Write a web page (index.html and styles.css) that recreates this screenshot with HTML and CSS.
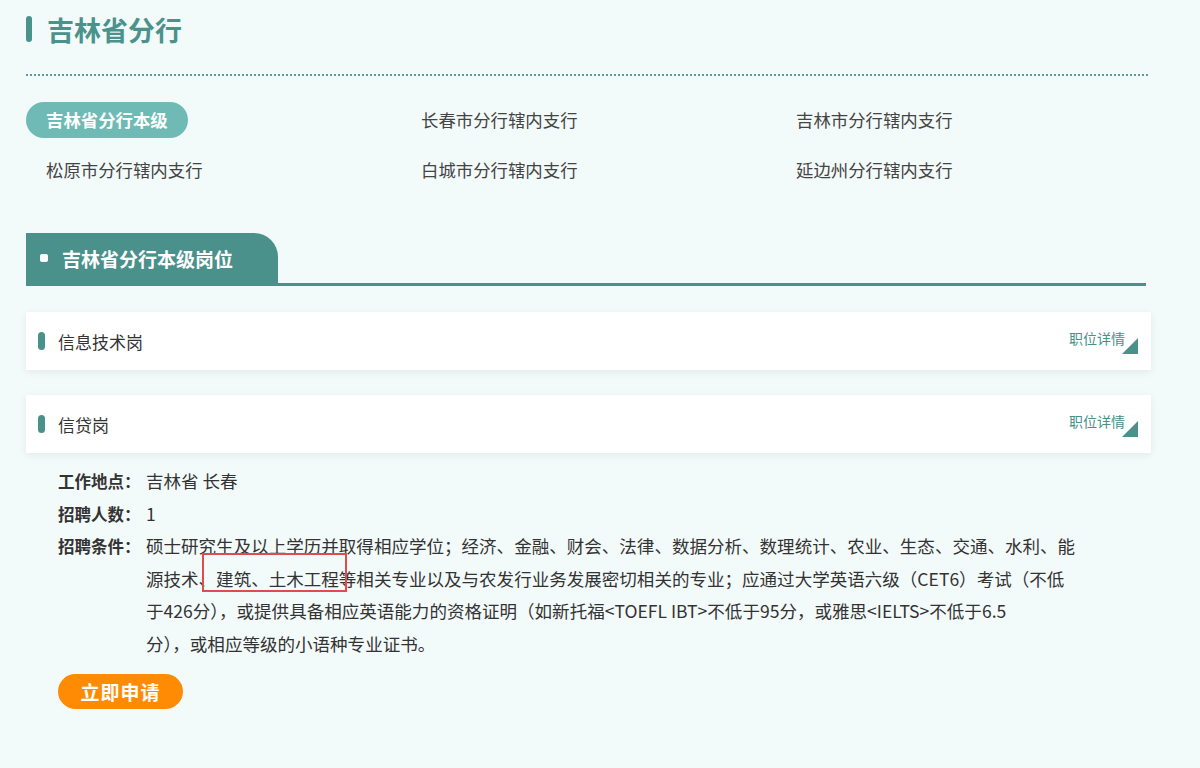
FILE: index.html
```html
<!DOCTYPE html>
<html lang="zh-CN">
  <head>
    <meta charset="UTF-8" />
    <meta name="viewport" content="width=device-width, initial-scale=1.0" />
    <title>吉林省分行 - 招聘岗位</title>
    <link rel="stylesheet" href="styles.css">
  </head>
  <body>
    <div class="page">
      <!-- title -->
      <div class="title">
        <span class="title-bar"></span>
        <h1>吉林省分行</h1>
      </div>
      <div class="divider"></div>

      <!-- branches -->
      <div class="branches">
        <div class="branch"><span class="pill">吉林省分行本级</span></div>
        <div class="branch">长春市分行辖内支行</div>
        <div class="branch">吉林市分行辖内支行</div>
        <div class="branch">松原市分行辖内支行</div>
        <div class="branch">白城市分行辖内支行</div>
        <div class="branch">延边州分行辖内支行</div>
      </div>

      <!-- section -->
      <div class="sec-head">
        <div class="sec-tab"><span class="sec-dot"></span>吉林省分行本级岗位</div>
      </div>

      <div class="job">
        <span class="job-dot"></span>
        <span class="job-name">信息技术岗</span>
        <a class="job-more">职位详情<span class="tri"></span></a>
      </div>

      <div class="job">
        <span class="job-dot"></span>
        <span class="job-name">信贷岗</span>
        <a class="job-more">职位详情<span class="tri"></span></a>
      </div>

      <div class="detail">
        <div class="row">
          <span class="label">工作地点：</span>
          <span class="value">吉林省 长春</span>
        </div>
        <div class="row">
          <span class="label">招聘人数：</span>
          <span class="value">1</span>
        </div>
        <div class="row">
          <span class="label">招聘条件：</span>
          <span class="value cond">硕士研究生及以上学历并取得相应学位；经济、金融、财会、法律、数据分析、数理统计、农业、生态、交通、水利、能源技术、建筑、土木工程等相关专业以及与农发行业务发展密切相关的专业；应通过大学英语六级（CET6）考试（不低于426分），或提供具备相应英语能力的资格证明（如新托福&lt;TOEFL IBT&gt;不低于95分，或雅思&lt;IELTS&gt;不低于6.5<br>分），或相应等级的小语种专业证书。<span class="mark"></span></span>
        </div>
        <button class="apply">立即申请</button>
      </div>
    </div>
  </body>
</html>
```

FILE: styles.css
```css
* {
  box-sizing: border-box;
}

body {
  margin: 0;
  background-color: #f3fafa;
  font-family: "Microsoft YaHei", "Noto Sans CJK SC", sans-serif;
  color: #333;
}

.page {
  width: 1122px;
  margin-left: 26px;
  padding-top: 11px;
}

.title {
  display: flex;
  align-items: center;
  gap: 15px;
  height: 36px;
}

.title-bar {
  width: 6px;
  height: 26px;
  border-radius: 3px;
  background-color: #4a938c;
}

.title h1 {
  margin: 0;
  font-size: 27px;
  font-weight: bold;
  color: #4a938c;
}

.divider {
  margin-top: 27px;
  border-top: 2px dotted #5c9d97;
}

.branches {
  display: grid;
  grid-template-columns: repeat(3, 375px);
  row-gap: 14px;
  margin-top: 26px;
}

.branch {
  height: 36px;
  line-height: 36px;
  padding-left: 20px;
  font-size: 17.4px;
  color: #444;
}

.branch .pill {
  display: inline-block;
  margin-left: -20px;
  padding: 0 20px;
  height: 36px;
  border-radius: 18px;
  background-color: #6fbab4;
  color: #fff;
  font-weight: bold;
}

.sec-head {
  width: 1120px;
  margin-top: 45px;
  border-bottom: 3px solid #4b918b;
}

.sec-tab {
  display: flex;
  align-items: center;
  gap: 14px;
  width: 252px;
  height: 50px;
  padding-left: 14px;
  border-top-right-radius: 24px;
  background-color: #4b918b;
  color: #fff;
  font-size: 19px;
  font-weight: bold;
}

.sec-dot {
  width: 8px;
  height: 8px;
  border-radius: 2px;
  background-color: #fff;
}

.job {
  display: flex;
  align-items: center;
  width: 1125px;
  height: 58px;
  margin-top: 26px;
  padding: 0 13px 0 12px;
  background-color: #fff;
  box-shadow: 0 2px 8px rgba(0, 0, 0, 0.07);
}

.job + .job {
  margin-top: 25px;
}

.job-dot {
  width: 7px;
  height: 18px;
  border-radius: 4px;
  background-color: #4a918b;
}

.job-name {
  margin-left: 13px;
  font-size: 17px;
  color: #333;
}

.job-more {
  display: flex;
  align-items: flex-start;
  margin-left: auto;
  font-size: 14px;
  color: #4a908a;
  cursor: pointer;
}

.tri {
  width: 0;
  height: 0;
  margin: 10px 0 0 -3px;
  border-left: 16px solid transparent;
  border-bottom: 16px solid #4a918b;
}

.detail {
  padding: 12px 0 0 32px;
}

.row {
  display: flex;
  line-height: 32.6px;
  font-size: 17.55px;
}

.label {
  flex: none;
  width: 88px;
  font-size: 16.5px;
  font-weight: bold;
  color: #333;
}

.value {
  color: #333;
}

.cond {
  position: relative;
  width: 933px;
}

/* red annotation box */
.mark {
  position: absolute;
  left: 56px;
  top: 23px;
  width: 145px;
  height: 39px;
  border: 2px solid #e14a4f;
}

.apply {
  margin-top: 13px;
  width: 125px;
  height: 35px;
  border: none;
  border-radius: 18px;
  background-color: #ff8b05;
  color: #fff;
  font-family: inherit;
  font-size: 19px;
  font-weight: bold;
  letter-spacing: 1px;
  cursor: pointer;
}
```
